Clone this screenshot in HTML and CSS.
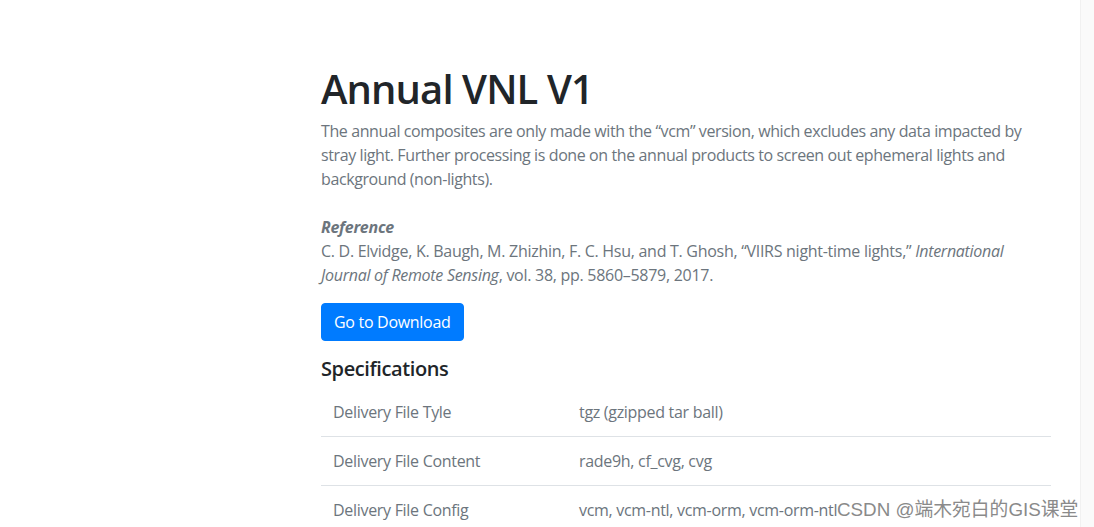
FILE: index.html
```html
<!DOCTYPE html>
<html lang="en">
<head>
<meta charset="utf-8">
<title>Annual VNL V1</title>
<link rel="stylesheet" href="styles.css">
</head>
<body>
<div class="page">
  <main class="main">
    <div class="spacer"></div>
    <article class="content">
      <h1 class="title">Annual VNL V1</h1>
      <p class="lead-text">The annual composites are only made with the “vcm” version, which excludes any data impacted by stray light. Further processing is done on the annual products to screen out ephemeral lights and background (non-lights).</p>
      <p class="reference">
        <strong class="ref-label">Reference</strong><br>
        C. D. Elvidge, K. Baugh, M. Zhizhin, F. C. Hsu, and T. Ghosh, “VIIRS night-time lights,” <em>International Journal of Remote Sensing</em>, vol. 38, pp. 5860–5879, 2017.
      </p>
      <a class="btn" href="#">Go to Download</a>
      <h5 class="section-title">Specifications</h5>
      <table class="spec-table">
        <tbody>
          <tr><td class="key">Delivery File Tyle</td><td>tgz (gzipped tar ball)</td></tr>
          <tr><td class="key">Delivery File Content</td><td>rade9h, cf_cvg, cvg</td></tr>
          <tr><td class="key">Delivery File Config</td><td>vcm, vcm-ntl, vcm-orm, vcm-orm-ntl</td></tr>
        </tbody>
      </table>
    </article>
  </main>
  <aside class="edge"></aside>
</div>
<div class="watermark">CSDN @端木宛白的GIS课堂</div>
</body>
</html>
```
FILE: styles.css
```css
html, body {
  margin: 0;
  padding: 0;
  height: 100%;
  overflow: hidden;
  background: #ffffff;
}
body {
  font-family: "Open Sans", "Noto Sans", sans-serif;
  font-size: 16px;
  line-height: 24px;
  color: #6c757d;
}
.page {
  display: flex;
  height: 100%;
}
.main {
  flex: 1;
  display: grid;
  grid-template-columns: 321px 730px;
  align-content: start;
}
.edge {
  width: 13px;
  background: #fafafa;
  border-left: 1px solid #f1f1f1;
}
.content {
  padding-top: 65px;
}
.title {
  margin: 0 0 6px;
  font-size: 40px;
  line-height: 48px;
  font-weight: 600;
  color: #212529;
  letter-spacing: -0.9px;
}
.lead-text {
  margin: 0 0 24px;
  letter-spacing: -0.4px;
}
.reference {
  margin: 0 0 16px;
  letter-spacing: -0.28px;
}
.ref-label {
  font-weight: 700;
  font-style: italic;
}
.btn {
  display: inline-block;
  box-sizing: border-box;
  height: 38px;
  padding: 6px 12px;
  border: 1px solid #007bff;
  border-radius: 4px;
  background: #007bff;
  color: #ffffff;
  text-decoration: none;
  font-size: 16px;
  line-height: 24px;
  letter-spacing: -0.3px;
}
.section-title {
  margin: 16px 0 7px;
  font-size: 20px;
  line-height: 24px;
  font-weight: 600;
  color: #212529;
  letter-spacing: -0.4px;
}
.spec-table {
  width: 730px;
  border-collapse: collapse;
}
.spec-table td {
  padding: 12px;
  border-bottom: 1px solid #dee2e6;
  color: #6c757d;
  vertical-align: top;
  letter-spacing: -0.3px;
}
.spec-table td.key {
  width: 222px;
}
.watermark {
  position: absolute;
  left: 837px;
  top: 498px;
  font-family: "Liberation Sans", "Noto Sans CJK SC", sans-serif;
  font-size: 18.8px;
  line-height: 24px;
  color: #8a8a8a;
  white-space: nowrap;
}
```
